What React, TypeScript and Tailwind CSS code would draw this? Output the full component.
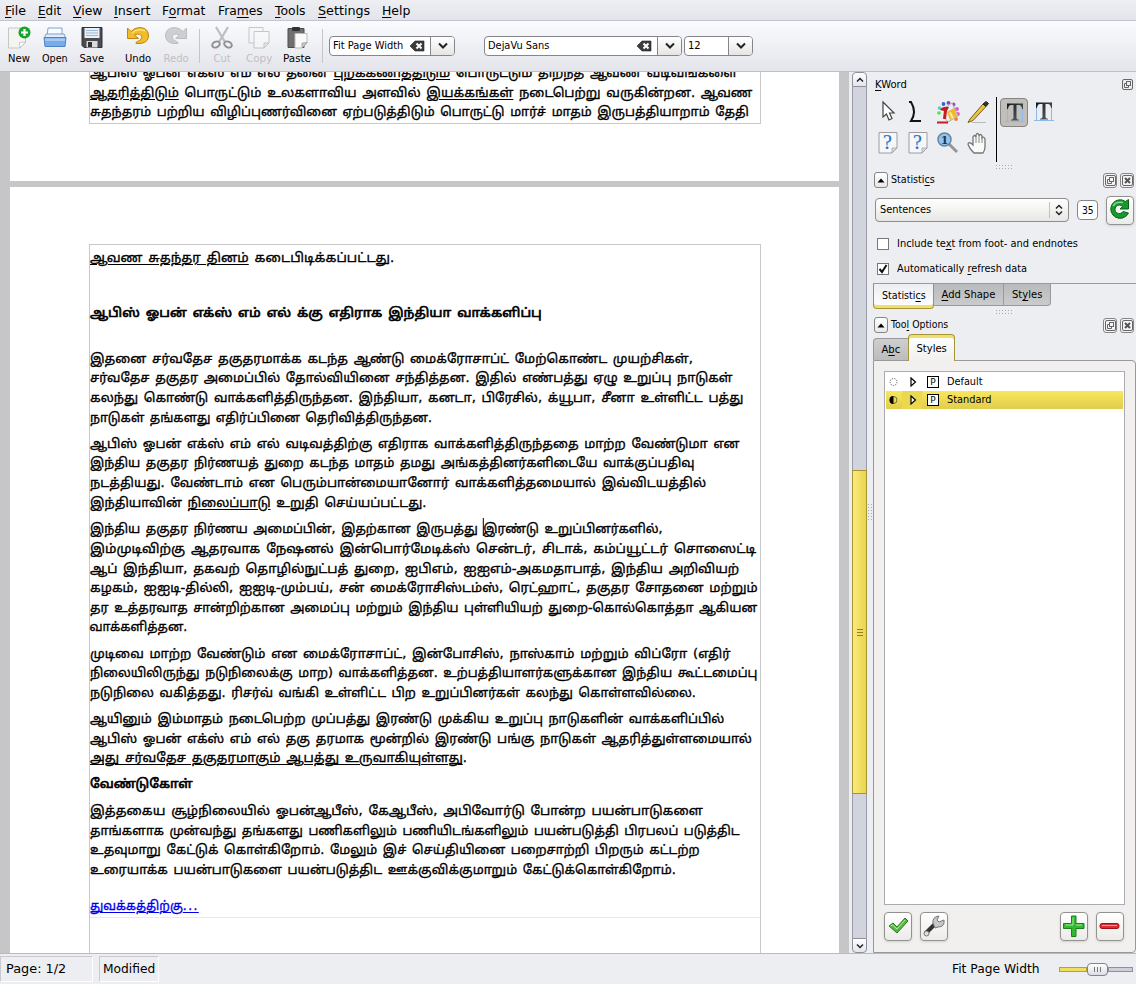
import { useLayoutEffect, useRef, type ReactNode } from "react";

/** Text that is stretched or squeezed horizontally to an exact width. */
function Fit({ w, className = "", children }: { w: number; className?: string; children: ReactNode }) {
  const ref = useRef<HTMLSpanElement>(null);
  useLayoutEffect(() => {
    const el = ref.current;
    if (!el) return;
    el.style.transform = "none";
    const natural = el.offsetWidth;
    if (natural > 0) el.style.transform = `scaleX(${w / natural})`;
  }, [w]);
  return (
    <span className={`block shrink-0 whitespace-pre ${className}`} style={{ width: w }}>
      <span ref={ref} className="inline-block origin-left">
        {children}
      </span>
    </span>
  );
}

type Line = [number, ReactNode];
type Block = { gap: string; bold?: boolean; link?: boolean; lines: Line[] };

const firstPage: Line[] = [
  [647, <>ஆபிஸ் ஓபன் எக்ஸ் எம் எல் தனை <u>புறக்கணித்திடும்</u> பொருட்டும் திறந்த ஆவண வடிவங்களை</>],
  [662, <><u>ஆதரித்திடும்</u> பொருட்டும் உலகளாவிய அளவில் <u>இயக்கங்கள்</u> நடைபெற்று வருகின்றன. ஆவண</>],
  [659, "சுதந்தரம் பற்றிய விழிப்புணர்வினை ஏற்படுத்திடும் பொருட்டு மார்ச் மாதம் இருபத்தியாறாம் தேதி"],
];

const blocks: Block[] = [
  { gap: "pt-[2.5px]", lines: [[304, <><u>ஆவண சுதந்தர தினம்</u> கடைபிடிக்கப்பட்டது.</>]] },
  { gap: "mt-[35.4px]", bold: true, lines: [[452, "ஆபிஸ் ஓபன் எக்ஸ் எம் எல் க்கு எதிராக இந்தியா வாக்களிப்பு"]] },
  {
    gap: "mt-[26.6px]",
    lines: [
      [603, "இதனை சர்வதேச தகுதரமாக்க கடந்த ஆண்டு மைக்ரோசாப்ட் மேற்கொண்ட முயற்சிகள்,"],
      [643, "சர்வதேச தகுதர அமைப்பில் தோல்வியினை சந்தித்தன. இதில் எண்பத்து ஏழு உறுப்பு நாடுகள்"],
      [653, "கலந்து கொண்டு வாக்களித்திருந்தன. இந்தியா, கனடா, பிரேசில், க்யூபா, சீனா உள்ளிட்ட பத்து"],
      [342, "நாடுகள் தங்களது எதிர்ப்பினை தெரிவித்திருந்தன."],
    ],
  },
  {
    gap: "mt-[6.4px]",
    lines: [
      [649, "ஆபிஸ் ஓபன் எக்ஸ் எம் எல் வடிவத்திற்கு எதிராக வாக்களித்திருந்ததை மாற்ற வேண்டுமா என"],
      [605, "இந்திய தகுதர நிர்ணயத் துறை கடந்த மாதம் தமது அங்கத்தினர்களிடையே வாக்குப்பதிவு"],
      [616, "நடத்தியது. வேண்டாம் என பெரும்பான்மையானோர் வாக்களித்தமையால் இவ்விடயத்தில்"],
      [337, <>இந்தியாவின் <u>நிலைப்பாடு</u> உறுதி செய்யப்பட்டது.</>],
    ],
  },
  {
    gap: "mt-[7px]",
    lines: [
      [573, <>இந்திய தகுதர நிர்ணய அமைப்பின், இதற்கான இருபத்து <span className="-ml-px border-l-[1.5px] border-black pt-[3px]">இரண்டு</span> உறுப்பினர்களில்,</>],
      [666, "இம்முடிவிற்கு ஆதரவாக நேஷனல் இன்பொர்மேடிக்ஸ் சென்டர், சிடாக், கம்ப்யூட்டர் சொஸைட்டி"],
      [649, "ஆப் இந்தியா, தகவற் தொழில்நுட்பத் துறை, ஐபிஎம், ஐஐஎம்-அகமதாபாத், இந்திய அறிவியற்"],
      [668, "கழகம், ஐஐடி-தில்லி, ஐஐடி-மும்பய், சன் மைக்ரோசிஸ்டம்ஸ், ரெட்ஹாட், தகுதர சோதனை மற்றும்"],
      [667, "தர உத்தரவாத சான்றிற்கான அமைப்பு மற்றும் இந்திய புள்ளியியற் துறை-கொல்கொத்தா ஆகியன"],
      [98, "வாக்களித்தன."],
    ],
  },
  {
    gap: "mt-[6.5px]",
    lines: [
      [640, "முடிவை மாற்ற வேண்டும் என மைக்ரோசாப்ட், இன்போசிஸ், நாஸ்காம் மற்றும் விப்ரோ (எதிர்"],
      [667, "நிலையிலிருந்து நடுநிலைக்கு மாற) வாக்களித்தன. உற்பத்தியாளர்களுக்கான இந்திய கூட்டமைப்பு"],
      [606, "நடுநிலை வகித்தது. ரிசர்வ் வங்கி உள்ளிட்ட பிற உறுப்பினர்கள் கலந்து கொள்ளவில்லை."],
    ],
  },
  {
    gap: "mt-[6.5px]",
    lines: [
      [634, "ஆயினும் இம்மாதம் நடைபெற்ற முப்பத்து இரண்டு முக்கிய உறுப்பு நாடுகளின் வாக்களிப்பில்"],
      [662, "ஆபிஸ் ஓபன் எக்ஸ் எம் எல் தகு தரமாக மூன்றில் இரண்டு பங்கு நாடுகள் ஆதரித்துள்ளமையால்"],
      [377, <><u>அது சர்வதேச தகுதரமாகும் ஆபத்து உருவாகியுள்ளது</u>.</>],
    ],
  },
  { gap: "mt-[6.5px]", bold: true, lines: [[102, "வேண்டுகோள்"]] },
  {
    gap: "mt-[7px]",
    lines: [
      [613, "இத்தகைய சூழ்நிலையில் ஓபன்ஆபீஸ், கேஆபீஸ், அபிவோர்டு போன்ற பயன்பாடுகளை"],
      [650, "தாங்களாக முன்வந்து தங்களது பணிகளிலும் பணியிடங்களிலும் பயன்படுத்தி பிரபலப் படுத்திட"],
      [610, "உதவுமாறு கேட்டுக் கொள்கிறோம். மேலும் இச் செய்தியினை பறைசாற்றி பிறரும் கட்டற்ற"],
      [586, "உரையாக்க பயன்பாடுகளை பயன்படுத்திட ஊக்குவிக்குமாறும் கேட்டுக்கொள்கிறோம்."],
    ],
  },
  { gap: "mt-[16px]", link: true, lines: [[109, <u>துவக்கத்திற்கு<span className="tracking-[1.5px]">...</span></u>]] },
];

function TextLine({ line, className = "" }: { line: Line; className?: string }) {
  return (
    <Fit w={line[0]} className={`-ml-[0.5px] h-[19.65px] text-[12.500px] leading-[19.65px] [word-spacing:1.5px] ${className}`}>
      {line[1]}
    </Fit>
  );
}

const menus: [number, string, string, string, string][] = [
  [21, "", "F", "ile", "ml-[5px]"],
  [23, "", "E", "dit", "ml-[12px]"],
  [29, "", "V", "iew", "ml-[12px]"],
  [36, "", "I", "nsert", "ml-[12px]"],
  [43, "F", "o", "rmat", "ml-[12px]"],
  [45, "Fra", "m", "es", "ml-[13px]"],
  [31, "", "T", "ools", "ml-[12px]"],
  [52, "", "S", "ettings", "ml-[12px]"],
  [28, "", "H", "elp", "ml-[12px]"],
];

function Tool({ label, w, box, off, children }: { label: string; w: number; box: string; off?: boolean; children: ReactNode }) {
  return (
    <div className={`flex flex-col items-center pt-[4px] ${box} ${off ? "text-[#bfc0c5]" : ""}`}>
      <svg width="24" height="24" viewBox="0 0 24 24" className={off ? "opacity-50" : ""}>{children}</svg>
      <Fit w={w} className="mt-[3px] text-[10px] leading-[13px]">{label}</Fit>
    </div>
  );
}

const Chevron = () => (
  <svg width="12" height="8" viewBox="0 0 12 8" fill="none" stroke="#222" strokeWidth="2"><path d="M2 1.5 6 5.5 10 1.5" /></svg>
);

function Combo({ box, w, text, clear, arrow }: { box: string; w: number; text: string; clear?: boolean; arrow: string }) {
  return (
    <div className={`flex h-5 overflow-hidden rounded border border-[#85868d] bg-white ${box}`}>
      <div className="flex flex-1 items-center justify-between pr-[5px] pl-[3px]">
        <Fit w={w} className="text-[10px] leading-[14px]">{text}</Fit>
        {clear && (
          <svg width="15" height="12" viewBox="0 0 15 12">
            <path d="M0 6 5 1H14V11H5Z" fill="#3d3d3d" stroke="#222" strokeWidth=".6" />
            <path d="m6.5 3.5 5 5m0-5-5 5" stroke="#fff" strokeWidth="2" />
          </svg>
        )}
      </div>
      <div className={`flex items-center justify-center border-l border-[#85868d] bg-linear-to-b from-white to-[#e6e5e3] ${arrow}`}><Chevron /></div>
    </div>
  );
}

function Restore() {
  return (
    <svg width="11" height="11" viewBox="0 0 11 11" fill="none" stroke="#666">
      <rect x=".5" y=".5" width="10" height="10" rx="1.5" />
      <rect x="4.5" y="2.5" width="4" height="4" /><path d="M4 4.5H2.500V8.500H6.500V7" />
    </svg>
  );
}

function DockButton({ close }: { close?: boolean }) {
  return (
    <div className="flex h-[15px] w-[14px] items-center justify-center rounded-[3px] border border-[#858585] bg-[#f4f4f4]">
      {close ? (
        <svg width="11" height="11" viewBox="0 0 11 11" fill="none" stroke="#666">
          <rect x=".5" y=".5" width="10" height="10" rx="1.5" /><path d="m3 3 5 5m0-5-5 5" strokeWidth="2" stroke="#555" />
        </svg>
      ) : <Restore />}
    </div>
  );
}

function DockHeader({ w, children }: { w: number; children: ReactNode }) {
  return (
    <div className="flex h-4 items-center pr-[2px] pl-px">
      <div className="flex h-4 w-[14px] items-center justify-center rounded-[3px] border border-[#858585] bg-linear-to-b from-white to-[#e8e8e8]">
        <svg width="8" height="5" viewBox="0 0 8 5"><path d="M4 .5 7.500 4.500H.5Z" /></svg>
      </div>
      <Fit w={w} className="ml-[3px] text-[10px] leading-4">{children}</Fit>
      <div className="ml-auto flex gap-[3px]"><DockButton /><DockButton close /></div>
    </div>
  );
}

function Grip({ wide }: { wide?: boolean }) {
  const cols = wide ? [0, 1, 2, 3, 4, 5] : [0, 1];
  const rows = wide ? [0, 1] : [0, 1, 2, 3, 4, 5];
  return (
    <svg width={wide ? 18 : 6} height={wide ? 6 : 18} fill="#a9aab0">
      {cols.map((c) => rows.map((r) => <rect key={`${c}-${r}`} x={c * 3} y={r * 3} width="1" height="1" />))}
    </svg>
  );
}

function BigButton({ className = "", children }: { className?: string; children: ReactNode }) {
  return (
    <div className={`flex h-[29px] w-7 items-center justify-center rounded border border-[#92928f] bg-linear-to-b from-white to-[#ecebe9] shadow-sm ${className}`}>
      <svg width="24" height="24" viewBox="0 0 24 24">{children}</svg>
    </div>
  );
}

function HelpPage() {
  return (
    <svg width="20" height="22" viewBox="0 0 20 22">
      <path d="M1 .5H19V16L14 21H1Z" fill="#f6f7f9" stroke="#9a9ca0" />
      <path d="M19 16H14V21Z" fill="#d8d9dc" stroke="#9a9ca0" strokeWidth=".7" />
      <text x="9.500" y="17" textAnchor="middle" fontFamily="Liberation Serif, serif" fontSize="20" fill="#1f72d2" stroke="#1f72d2" strokeWidth=".2">?</text>
    </svg>
  );
}

function TextTool() {
  return (
    <svg width="20" height="22" viewBox="0 0 20 22">
      <defs>
        <linearGradient id="serif-t" x1="0" y1="0" x2="1" y2="1"><stop offset="0" stopColor="#14181b" /><stop offset="1" stopColor="#5d686f" /></linearGradient>
      </defs>
      <path d="M2.500 1V20M17.500 1V20M0 19.500H20" stroke="#8db9ec" fill="none" />
      <path d="M2 1.500H18V7H17Q16.500 3 14 3H11.500V16Q11.500 17.500 14 17.700V18.500H6V17.700Q8.500 17.500 8.500 16V3H6Q3.500 3 3 7H2Z" fill="url(#serif-t)" />
    </svg>
  );
}

function StyleRow({ name, w, selected }: { name: string; w: number; selected?: boolean }) {
  return (
    <div className={`flex h-[18px] items-center ${selected ? "bg-linear-to-b from-[#f8e75c] to-[#e0cd4c]" : ""}`}>
      <svg width="16" height="18" viewBox="0 0 16 18">
        <circle cx="7.500" cy="9" r="3.500" fill="none" stroke={selected ? "#777022" : "#555"} strokeDasharray={selected ? undefined : "1.2 1.2"} />
        {selected && <path d="M7.500 5a4 4 0 0 0 0 8Z" />}
      </svg>
      <div className={`flex h-full w-5 items-center justify-center pl-[2px] ${selected ? "bg-[#ead850]" : ""}`}>
        <svg width="7" height="10" viewBox="0 0 7 10"><path d="M1 1 5.500 5 1 9Z" fill="#fff" stroke="#000" strokeWidth="1.200" /></svg>
      </div>
      <div className="ml-[5px] flex h-3 w-3 items-center justify-center border border-black bg-white text-[9px] leading-none">P</div>
      <Fit w={w} className="ml-[8px] text-[10px] leading-[18px]">{name}</Fit>
    </div>
  );
}

export default function App() {
  return (
    <div className="flex h-[984px] w-[1136px] flex-col overflow-hidden bg-[#edeef2] font-['DejaVu_Sans',sans-serif] text-black [&_u]:underline-offset-2">
      <div className="flex h-[21px] shrink-0 items-center border-b border-[#c3c4d2] bg-linear-to-b from-[#eeeff3] to-[#e4e5ea] pt-px text-[12px]">
        {menus.map(([w, a, k, b, m]) => <Fit key={a + k + b} w={w} className={m}>{a}<u>{k}</u>{b}</Fit>)}
      </div>

      <div className="flex h-[51px] shrink-0 border-b border-[#bfc0c6] bg-linear-to-b from-[#fafbfd] to-[#e4e5eb]">
        <Tool label="New" w={22} box="w-[38px]">
          <path d="M1.500 3H18.500V17L13 23H1.500Z" fill="#f4f5f1" stroke="#c6c7c4" /><path d="M18.500 17 12.500 17.500 13 23Z" fill="#fff" stroke="#aaa" strokeWidth=".6" />
          <circle cx="17.500" cy="7.500" r="6" fill="#17a42a" /><path d="M17.500 4V11M14 7.500H21" stroke="#fff" strokeWidth="2.200" />
        </Tool>
        <Tool label="Open" w={26} box="w-[34px]">
          <path d="M5 3H19V12H4Z" fill="#fafbfd" stroke="#7fa3d6" /><path d="M3 9H21L22 11V13H2V11Z" fill="#e4ecf7" stroke="#7f9fc9" />
          <path d="M1 12.500H23L22 21.500H2Z" fill="#7aacea" stroke="#4d82c8" /><path d="M2 13.500H22L21.700 16H2.300Z" fill="#a7caf5" />
        </Tool>
        <Tool label="Save" w={25} box="w-[40px]">
          <path d="M2 2.500H22V22.500H4L2 20.500Z" fill="#4a4b50" stroke="#333" /><rect x="4.500" y="3" width="15" height="10" fill="#e9f0f8" />
          <path d="M6 5.500H18M6 8H18M6 10.500H18" stroke="#9db8d6" /><rect x="6.500" y="16" width="11" height="6.500" fill="#d9dadd" /><rect x="8" y="17" width="4" height="5" fill="#333" />
        </Tool>
        <Tool label="Undo" w={26} box="ml-[6px] w-[40px]">
          <path d="M1.500 3V13.500H12.500L8.500 10Q15 7.500 16 12 16 15 10 17.500V18.500Q21 19.500 22.500 12 23 3 14 2.500 8.500 2.500 5 6.500Z" fill="#f2bd29" stroke="#bd8712" />
          <path d="M6 8Q12 2.500 19 6" stroke="#fff0a2" fill="none" />
        </Tool>
        <Tool label="Redo" w={25} box="w-[36px]" off>
          <path d="M22.500 3V13.500H11.500L15.500 10Q9 7.500 8 12 8 15 14 17.500V18.500Q3 19.500 1.500 12 1 3 10 2.500 15.500 2.500 19 6.500Z" fill="#aaa" stroke="#888" />
        </Tool>
        <div className="mt-2 ml-[5px] h-[34px] w-px bg-[#c5c6cb]" />
        <Tool label="Cut" w={17} box="ml-[3px] w-[38px]" off>
          <path d="M6 2 15 17M18 2 9 17" stroke="#888" strokeWidth="2.200" /><ellipse cx="6" cy="19.500" rx="4" ry="2.800" transform="rotate(-25 6 19.500)" fill="none" stroke="#333" strokeWidth="2" /><ellipse cx="18" cy="19.500" rx="4" ry="2.800" transform="rotate(25 18 19.500)" fill="none" stroke="#333" strokeWidth="2" />
        </Tool>
        <Tool label="Copy" w={26} box="w-[36px]" off>
          <path d="M2 2.500H16V18H2Z" fill="#f8f8f8" stroke="#999" /><path d="M7 6.500H22V18L17 23H7Z" fill="#fafafa" stroke="#999" /><path d="M22 18H17V23Z" fill="#ddd" stroke="#999" />
        </Tool>
        <Tool label="Paste" w={28} box="w-[40px]">
          <path d="M3 3.500H19V22.500H3Z" fill="#707071" stroke="#4b4b4c" /><rect x="7" y="2" width="8" height="4" rx="1" fill="#333" />
          <path d="M10 8.500H22V18L17 23H10Z" fill="#fafafa" stroke="#bbb" /><path d="M22 17.500 17 18V23Z" fill="#ccc" stroke="#888" strokeWidth=".6" />
        </Tool>
        <div className="mt-2 ml-[5px] h-[34px] w-px bg-[#c5c6cb]" />
        <Combo box="mt-[15px] ml-[6px] w-[126px]" w={70} text="Fit Page Width" clear arrow="w-[24px]" />
        <Combo box="mt-[15px] ml-[29px] w-[198px]" w={61} text="DejaVu Sans" clear arrow="w-[24px]" />
        <Combo box="mt-[15px] ml-[2px] w-[69px]" w={13} text="12" arrow="w-[24px]" />
      </div>

      <div className="flex min-h-0 flex-1">
        <div className="flex w-[849px] shrink-0 flex-col gap-[6px] overflow-hidden bg-[#c6c5c7] pr-[10px] pl-[10px] font-['DejaVu_Sans','Noto_Sans_Tamil',sans-serif] [-webkit-text-stroke:0.35px]">
          <div className="h-[109px] shrink-0 bg-white pl-[79px]">
            <div className="flex h-[52px] w-[672px] flex-col justify-end overflow-hidden border-x border-b border-[#c9c9c9] pb-px">
              {firstPage.map((l, i) => <TextLine key={i} line={l} />)}
            </div>
          </div>
          <div className="h-[766px] shrink-0 bg-white pt-[57px] pl-[79px]">
            <div className="h-[709px] w-[672px] border-x border-t border-[#c9c9c9]">
              <div className="h-[673px] border-b border-[#e9e9e9]">
                {blocks.map((b, i) => (
                  <div key={i} className={`flow-root ${b.gap} ${b.bold ? "[-webkit-text-stroke:0.65px]" : ""} ${b.link ? "text-[#0000ee]" : ""}`}>
                    {b.lines.map((l, j) => <TextLine key={j} line={l} />)}
                  </div>
                ))}
              </div>
            </div>
          </div>
        </div>

        <div className="ml-[3px] flex w-[15px] shrink-0 flex-col">
          <div className="flex h-[15px] items-center justify-center rounded-t border border-[#8d8f9b] bg-linear-to-b from-white to-[#e4e5ea]">
            <svg width="8" height="6" fill="none" stroke="#222" strokeWidth="1.500"><path d="M1 4.500 4 1.500 7 4.500" /></svg>
          </div>
          <div className="h-[383px] border-x border-[#999ba9] bg-[#d1d4dd]" />
          <div className="flex h-[324px] items-center justify-center border border-[#a49433] bg-linear-to-r from-[#fbea79] to-[#e9d54d]">
            <svg width="6" height="8" fill="#8e8022"><path d="M0 1H6V2H0ZM0 4H6V5H0ZM0 7H6V8H0Z" /></svg>
          </div>
          <div className="flex-1 border-x border-[#999ba9] bg-[#d1d4dd]" />
          <div className="flex h-[15px] items-center justify-center rounded-b border border-[#8d8f9b] bg-linear-to-b from-white to-[#e4e5ea]">
            <svg width="8" height="6" fill="none" stroke="#222" strokeWidth="1.500"><path d="M1 1.500 4 4.500 7 1.500" /></svg>
          </div>
        </div>
        <div className="flex w-[6px] shrink-0 items-center pl-px"><Grip /></div>

        <div className="flex w-[263px] shrink-0 flex-col text-[10px]">
          <div className="flex h-[24px] items-center justify-between pr-[3px] pl-[2px]">
            <Fit w={32}><u>K</u>Word</Fit><Restore />
          </div>
          <div className="flex h-[69px]">
            <div className="grid w-[123px] grid-cols-4 grid-rows-[31px_31px] place-items-center pr-[3px]">
              <svg width="24" height="24" viewBox="0 0 24 24"><path d="M7 2V17L10.500 14 13 20 16 18.500 13.500 13H18Z" fill="#fff" stroke="#444" strokeWidth="1.200" /></svg>
              <svg width="24" height="24" viewBox="0 0 24 24" fill="none" stroke="#111" strokeWidth="2"><path d="M3 2H5Q11 12 5 21H15" /></svg>
              <svg width="24" height="24" viewBox="0 0 24 24">
                <circle cx="3" cy="13" r="1.800" fill="#5ae04b" /><circle cx="3.500" cy="8" r="1.800" fill="#4bd5c5" /><circle cx="7.500" cy="4" r="1.900" fill="#3865d1" /><circle cx="12.500" cy="2.800" r="1.900" fill="#7544d1" /><circle cx="17.500" cy="4.500" r="1.900" fill="#a840d1" /><circle cx="21" cy="9" r="1.900" fill="#dc58cd" /><circle cx="22" cy="14" r="1.900" fill="#ef5bb7" /><circle cx="20" cy="19" r="1.900" fill="#f0802a" />
                <path d="m9 8 7-5 6 13-10 6-4-5Z" fill="#eee" stroke="#aaa" /><path d="m11 12 7-4 3 8-7 4Z" fill="#efb92f" /><path d="m13 13 2-1 3 6-2 1Z" fill="#fbe7a0" /><path d="M13 7Q6 6 4 10L8 11 7 19H10L11 11Z" fill="#c61d20" /><path d="M1 22.500H12" stroke="#c61d20" strokeWidth="2" />
              </svg>
              <svg width="24" height="24" viewBox="0 0 24 24"><path d="M4 19 17 4 20 6.500 7 20.500 2 22.500Z" fill="#eac343" stroke="#765d21" /><path d="m17 4 3-2.500 2.500 2L20 6.500Z" fill="#333" stroke="#222" /><path d="M6 22.500H20" stroke="#bbb" /></svg>
              <HelpPage /><HelpPage />
              <svg width="24" height="24" viewBox="0 0 24 24"><path d="m13 13 8 8" stroke="#92959a" strokeWidth="3" /><circle cx="8.500" cy="8.500" r="6.500" fill="#92c4ed" stroke="#6e8499" strokeWidth="1.500" /><text x="8.500" y="12.500" textAnchor="middle" fontSize="11" fontWeight="bold" fontFamily="DejaVu Serif, serif" fill="#16365f">1</text></svg>
              <svg width="24" height="24" viewBox="0 0 24 24"><path d="M8 22Q3 17 2 13 3 10 7 14V6Q8.500 3 10 6V4Q11.500 1 13 4V5Q14.500 2 16 5V7Q18 5 19 8V16Q19 19 17 22Z" fill="#fafafa" stroke="#777" strokeWidth="1.300" /><path d="M10 6V12M13 5V12M16 6V12" stroke="#888" /></svg>
            </div>
            <div className="mt-px h-[65px] w-px bg-black" />
            <div className="mt-[2px] ml-[3px] flex h-[29px] w-7 items-center justify-center rounded border border-[#858581] bg-[#c1bfbc] pl-[2px]"><TextTool /></div>
            <div className="mt-px ml-[6px] flex h-[29px] w-5 items-center"><TextTool /></div>
          </div>
          <div className="flex h-[7px] items-start pl-[123px]"><Grip wide /></div>
          <DockHeader w={44}>Statisti<u>c</u>s</DockHeader>
          <div className="mt-[7px] flex h-[30px] items-center pl-[2px]">
            <div className="flex h-6 w-[194px] items-center rounded border border-[#8d8d8a] bg-linear-to-b from-white to-[#e8e7e5] pr-[5px] pl-[4px]">
              <Fit w={51} className="leading-6">Sentences</Fit>
              <div className="ml-auto h-4 w-px bg-[#bfc0cf]" />
              <svg className="ml-[5px]" width="8" height="12" fill="none" stroke="#222" strokeWidth="1.500"><path d="m1 4.500 3-3 3 3M1 7.500l3 3 3-3" /></svg>
            </div>
            <div className="ml-[8px] flex h-5 w-[21px] items-center justify-center rounded border border-[#85868d] bg-white"><Fit w={12}>35</Fit></div>
            <BigButton className="ml-[8px]">
              <path d="M20.500 15A9.300 9.300 0 1 1 17.500 3.500L20.500 1.500V11H12L14.500 8.500A4.300 4.300 0 1 0 15 13.500Z" fill="#159a2d" stroke="#0b631b" /><path d="M5 8Q8 3 15 4.500" stroke="#83d88d" fill="none" strokeWidth="1.500" />
            </BigButton>
          </div>
          <div className="mt-[12px] flex h-[13px] items-center pl-[4px]">
            <div className="h-3 w-3 border border-[#777] bg-white" /><Fit w={181} className="ml-[8px]">Include te<u>x</u>t from foot- and endnotes</Fit>
          </div>
          <div className="mt-[12px] flex h-[13px] items-center pl-[4px]">
            <div className="flex h-3 w-3 items-center justify-center border border-[#777] bg-white"><svg width="10" height="10" fill="none" stroke="#111" strokeWidth="2"><path d="M1.500 5 4 8 8.500 1" /></svg></div>
            <Fit w={130} className="ml-[8px]">Automatically <u>r</u>efresh data</Fit>
          </div>
          <div className="mt-[8px] flex h-[26px] items-start border-t border-[#999a9f]">
            <div className="flex h-[25px] w-[61px] items-center justify-center rounded-b border-x border-b border-[#a69538] bg-linear-to-b from-[#edeef2] to-white pb-[2px] shadow-[inset_0_-3px_0_#efdf6d]"><Fit w={44}>Statisti<u>c</u>s</Fit></div>
            <div className="flex h-[22px] w-[70px] items-center justify-center border-r border-b border-[#98999d] bg-linear-to-b from-[#b9babc] to-[#cacbcd]"><Fit w={54}><u>A</u>dd Shape</Fit></div>
            <div className="flex h-[22px] w-[47px] items-center justify-center rounded-br border-r border-b border-[#98999d] bg-linear-to-b from-[#b9babc] to-[#cacbcd]"><Fit w={30}>St<u>y</u>les</Fit></div>
          </div>
          <div className="flex h-[8px] items-start pt-px pl-[123px]"><Grip wide /></div>
          <DockHeader w={57}>Too<u>l</u> Options</DockHeader>
          <div className="mt-[2px] flex h-[25px] items-end">
            <div className="flex h-[22px] w-[35px] items-center justify-center rounded-tl border-t border-l border-[#98999d] bg-linear-to-b from-[#cfcfd0] to-[#bcbcbd]"><Fit w={19}>A<u>b</u>c</Fit></div>
            <div className="relative top-px flex h-[27px] w-[47px] items-center justify-center rounded-t border-x border-t border-[#a69538] bg-linear-to-b from-white to-[#f1f0ef] shadow-[inset_0_3px_0_#efdf6d]"><Fit w={30}>Styles</Fit></div>
          </div>
          <div className="flex flex-1 flex-col rounded-r border border-[#999] bg-[#f1f0ef] pt-[10px] pl-[10px]">
            <div className="h-[534px] w-[241px] border border-[#aaacb1] bg-white p-px">
              <StyleRow name="Default" w={36} /><StyleRow name="Standard" w={45} selected />
            </div>
            <div className="mt-[7px] flex w-[240px] gap-[8px]">
              <BigButton><path d="m3 11 4-3 4 4 8-9 3 3L11 18Z" fill="#57b941" stroke="#2a7820" /><path d="m4.500 11 2-1 4.500 4 8-9" stroke="#b8e9a7" fill="none" /></BigButton>
              <BigButton><path d="M4 18 12 10" stroke="#333" strokeWidth="4" strokeLinecap="round" /><path d="M11 8Q10 2 17 1L15 5 17 7 22 5Q23 12 16 12L13 13Z" fill="#c7c7c7" stroke="#777" /><circle cx="4.500" cy="18.500" r="2.500" fill="#ddd" stroke="#777" /></BigButton>
              <BigButton className="ml-auto"><path d="M9.500 1H14V8.500H22V13.500H14V21.500H9.500V13.500H1.500V8.500H9.500Z" fill="#32b833" stroke="#168219" /><path d="M11 2.500V10H3.500M20 10H14" stroke="#a2eb9b" fill="none" /></BigButton>
              <BigButton><rect x="2" y="8.500" width="19" height="5" rx="2" fill="#d92d33" stroke="#a80e15" /><path d="M4 10.500H19" stroke="#f49a9a" /></BigButton>
            </div>
          </div>
        </div>
      </div>

      <div className="flex h-[31px] shrink-0 items-center border-t border-[#b9babf] text-[12px]">
        <div className="flex h-[26px] w-[93px] items-center border border-[#c9cad0] border-r-white border-b-white pl-[5px]"><Fit w={60}>Page: 1/2</Fit></div>
        <div className="ml-[6px] flex h-[26px] w-[60px] items-center border border-[#c9cad0] border-r-white border-b-white pl-[3px]"><Fit w={52}>Modified</Fit></div>
        <Fit w={88} className="ml-auto">Fit Page Width</Fit>
        <div className="mr-[3px] ml-[19px] flex items-center">
          <div className="h-[5px] w-[28px] border border-[#b3a13a] bg-[#f0df5e]" />
          <div className="flex h-[13px] w-[21px] items-center justify-center gap-[2px] rounded border border-[#80828f] bg-linear-to-b from-white to-[#dddee4]">
            <i className="h-[5px] w-px bg-[#777]" /><i className="h-[5px] w-px bg-[#777]" /><i className="h-[5px] w-px bg-[#777]" />
          </div>
          <div className="h-[5px] w-[25px] border border-[#8e909d] bg-[#cdd0da]" />
        </div>
      </div>
    </div>
  );
}
